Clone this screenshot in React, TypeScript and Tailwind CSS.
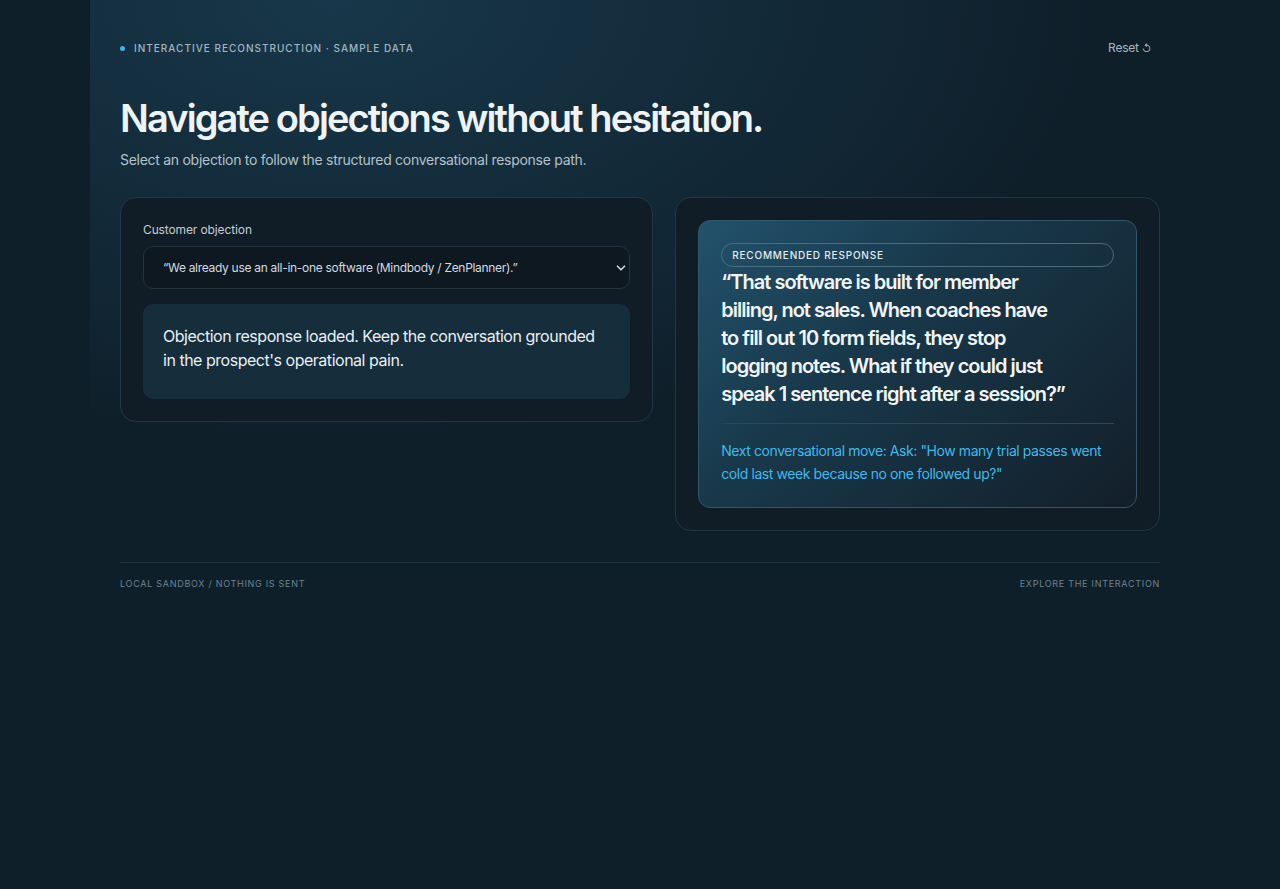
import { useState } from 'react'
import { ChevronDown } from 'lucide-react'

const objections = [
    {
        id: 'all-in-one',
        label: '“We already use an all-in-one software (Mindbody / ZenPlanner).”',
        response: [
            '“That software is built for member',
            'billing, not sales. When coaches have',
            'to fill out 10 form fields, they stop',
            'logging notes. What if they could just',
            'speak 1 sentence right after a session?”',
        ],
        next: 'Next conversational move: Ask: "How many trial passes went cold last week because no one followed up?"',
    },
    {
        id: 'price',
        label: '“It’s too expensive for a gym our size.”',
        response: ['“Fair. What does one lost trial member', 'cost you over a year?”'],
        next: 'Next conversational move: Ask: "How many trials convert today?"',
    },
]

export default function App() {
    const [selected, setSelected] = useState(objections[0].id)
    const current = objections.find(o => o.id === selected) ?? objections[0]

    return (
        <div className="min-h-screen bg-[#0f1f2a] font-[Inter,'Noto_Sans',sans-serif] text-[#e8eef2]">
            <div className="mx-auto max-w-[1100px] min-h-screen bg-[radial-gradient(ellipse_70%_50%_at_22%_0%,rgba(30,75,100,0.55),rgba(15,31,42,0)_100%)] px-[30px] pt-[41px]">
                {/* Top bar */}
                <div className="flex items-center justify-between h-[14px]">
                    <div className="flex items-center gap-[9px]">
                        <span className="h-[5px] w-[5px] rounded-full bg-[#38b6f0]" />
                        <span className="text-[10px] font-medium uppercase tracking-[0.1em] text-[#a3b5c1]">
                            Interactive reconstruction · Sample data
                        </span>
                    </div>
                    <button className="mr-[9px] flex items-center gap-[3px] text-[12px] tracking-[-0.02em] text-[#a7b6c0]">
                        Reset <span className="text-[10px] leading-none">↺</span>
                    </button>
                </div>

                {/* Heading */}
                <h1 className="mt-[42px] text-[38px] leading-[42px] font-semibold tracking-[-0.05em] text-[#eef3f6]">
                    Navigate objections without hesitation.
                </h1>
                <p className="mt-[11px] text-[14px] leading-[20px] tracking-[-0.02em] text-[#b4c2cb]">
                    Select an objection to follow the structured conversational response path.
                </p>

                {/* Panels */}
                <div className="mt-[27px] grid grid-cols-[1.1fr_1fr] items-start gap-[22px]">
                    <div className="rounded-[16px] border border-[#213745] bg-[#101c26] px-[22px] pb-[22px] pt-[23px]">
                        <label className="block text-[12px] leading-[18px] tracking-[-0.01em] text-[#c3ced5]">Customer objection</label>
                        <div className="relative mt-[7px]">
                            <select
                                value={selected}
                                onChange={(e) => setSelected(e.target.value)}
                                className="h-[43px] w-full appearance-none rounded-[10px] border border-[#223340] bg-[#0d1821] pl-[19px] pr-[30px] text-[12px] tracking-[-0.025em] text-[#d2dbe0] outline-none"
                            >
                                {objections.map(o => (
                                    <option key={o.id} value={o.id}>{o.label}</option>
                                ))}
                            </select>
                            <ChevronDown className="pointer-events-none absolute right-[2px] top-1/2 h-[14px] w-[14px] -translate-y-1/2 text-[#c9d3d9]" strokeWidth={3} />
                        </div>
                        <div className="mt-[15px] min-h-[95px] rounded-[10px] bg-[#162d3b] px-[20px] pt-[20px] pb-[24px] text-[16px] leading-[24px] tracking-[-0.03em] text-[#e9eff3]">
                            Objection response loaded. Keep the conversation grounded in the prospect's operational pain.
                        </div>
                    </div>

                    <div className="rounded-[16px] border border-[#213745] bg-[#101c26] p-[22px]">
                        <div className="rounded-[12px] border border-[#34566a] bg-[linear-gradient(135deg,#22526c_0%,#18384a_40%,#131f29_100%)] p-[22px]">
                            <div className="flex h-[24px] items-center rounded-full border border-[#4a6d80] px-[10px] text-[10px] font-medium uppercase tracking-[0.08em] text-[#e3ebf0]">
                                Recommended response
                            </div>
                            <p className="mt-[1px] text-[20px] leading-[28px] font-semibold tracking-[-0.05em] text-[#f0f4f7]">
                                {current.response.map((line, i) => (
                                    <span key={i} className="block">{line}</span>
                                ))}
                            </p>
                            <div className="mt-[15px] h-px bg-[#2c4858]" />
                            <p className="mt-[15px] text-[14px] leading-[23px] tracking-[-0.03em] text-[#3fb9ea]">
                                {current.next}
                            </p>
                        </div>
                    </div>
                </div>

                {/* Footer */}
                <div className="mt-[31px] border-t border-[#1f3240] pt-[14px] flex items-center justify-between text-[9px] leading-[14px] uppercase tracking-[0.08em] text-[#6d8290]">
                    <span>Local sandbox / Nothing is sent</span>
                    <span>Explore the interaction</span>
                </div>
            </div>
        </div>
    )
}
